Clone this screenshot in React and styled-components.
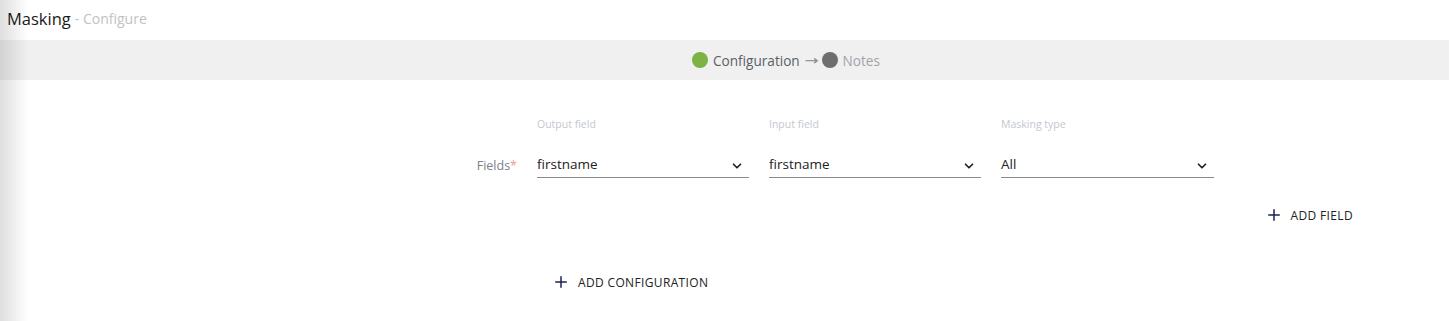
import React from "react";
import styled, { createGlobalStyle } from "styled-components";
import { Plus, ChevronDown } from "lucide-react";

const GlobalStyle = createGlobalStyle`
  body {
    margin: 0;
    font-family: "Open Sans", "Noto Sans", sans-serif;
    background: #fff;
  }
`;

const Page = styled.div`
  position: relative;
  min-height: 100vh;

  &::after {
    content: "";
    position: absolute;
    left: 0;
    top: 0;
    bottom: 0;
    width: 28px;
    background: linear-gradient(to right, rgba(0, 0, 0, 0.13), rgba(0, 0, 0, 0));
    pointer-events: none;
  }
`;

const Header = styled.div`
  height: 40px;
  display: flex;
  align-items: center;
  padding-left: 7px;
  padding-bottom: 3px;
  box-sizing: border-box;
`;

const Title = styled.span`
  font-size: 16.5px;
  color: #1a1a1a;
`;

const SubTitle = styled.span`
  font-size: 14px;
  color: #c2c2c2;
  margin-left: 4px;
`;

const StepBar = styled.div`
  height: 40px;
  margin-right: 2px;
  background: #f0f0f0;
  display: flex;
  align-items: center;
  justify-content: center;
  padding-left: 123px;
  font-size: 13.6px;
`;

const Dot = styled.span`
  width: 16px;
  height: 16px;
  border-radius: 50%;
  background: ${(p) => (p.$active ? "#7cb342" : "#6e6e6e")};
  margin-right: 5px;
`;

const StepLabel = styled.span`
  color: ${(p) => (p.$active ? "#5a5f66" : "#a0a4a8")};
`;

const Arrow = styled.span`
  font-family: "DejaVu Sans", sans-serif;
  font-size: 13px;
  color: #8a8a8a;
  transform: scaleX(1.3);
  margin: 0 5px 0 6px;
`;

const Form = styled.div`
  width: 1369px;
  padding-top: 37px;
`;

const FieldGrid = styled.div`
  display: grid;
  grid-template-columns: 517px 212px 212px 213px;
  column-gap: 20px;
  row-gap: 19px;
  align-items: center;
`;

const ColumnLabel = styled.div`
  font-size: 10.5px;
  line-height: 14px;
  color: #c4c8d0;
`;

const RowLabel = styled.div`
  text-align: right;
  font-size: 12.5px;
  color: #7b8088;
  padding-top: 3px;
`;

const Required = styled.span`
  color: #ef9a9a;
`;

const Select = styled.div`
  height: 28px;
  border-bottom: 1px solid #8a8a8a;
  display: flex;
  align-items: center;
  justify-content: space-between;
  padding-top: 1px;
  padding-right: 5px;
  box-sizing: border-box;
  font-size: 13.5px;
  color: #222;

  svg {
    margin-top: 4px;
  }
`;

const ActionRow = styled.div`
  display: flex;
  justify-content: ${(p) => (p.$end ? "flex-end" : "flex-start")};
  padding-left: ${(p) => (p.$end ? "0" : "537px")};
  margin-top: ${(p) => p.$top}px;
`;

const TextButton = styled.button`
  height: 36px;
  display: flex;
  align-items: center;
  gap: 8px;
  padding: 0 16px 0 15px;
  border: none;
  background: none;
  font-family: "Open Sans", "Noto Sans", sans-serif;
  font-size: 12px;
  font-weight: 500;
  letter-spacing: 0.35px;
  color: #222;
  text-transform: uppercase;
  cursor: pointer;

  svg {
    color: #1a2352;
  }
`;

const columns = [
  { label: "Output field", value: "firstname" },
  { label: "Input field", value: "firstname" },
  { label: "Masking type", value: "All" },
];

export default function App() {
  return (
    <Page>
      <GlobalStyle />
      <Header>
        <Title>Masking</Title>
        <SubTitle>- Configure</SubTitle>
      </Header>
      <StepBar>
        <Dot $active />
        <StepLabel $active>Configuration</StepLabel>
        <Arrow>→</Arrow>
        <Dot />
        <StepLabel>Notes</StepLabel>
      </StepBar>
      <Form>
        <FieldGrid>
          <div />
          {columns.map((c) => (
            <ColumnLabel key={c.label}>{c.label}</ColumnLabel>
          ))}
          <RowLabel>
            Fields<Required>*</Required>
          </RowLabel>
          {columns.map((c) => (
            <Select key={c.label}>
              <span>{c.value}</span>
              <ChevronDown size={14} strokeWidth={3} />
            </Select>
          ))}
        </FieldGrid>
        <ActionRow $end $top={19}>
          <TextButton>
            <Plus size={18} strokeWidth={2} />
            Add field
          </TextButton>
        </ActionRow>
        <ActionRow $top={31}>
          <TextButton>
            <Plus size={18} strokeWidth={2} />
            Add configuration
          </TextButton>
        </ActionRow>
      </Form>
    </Page>
  );
}
